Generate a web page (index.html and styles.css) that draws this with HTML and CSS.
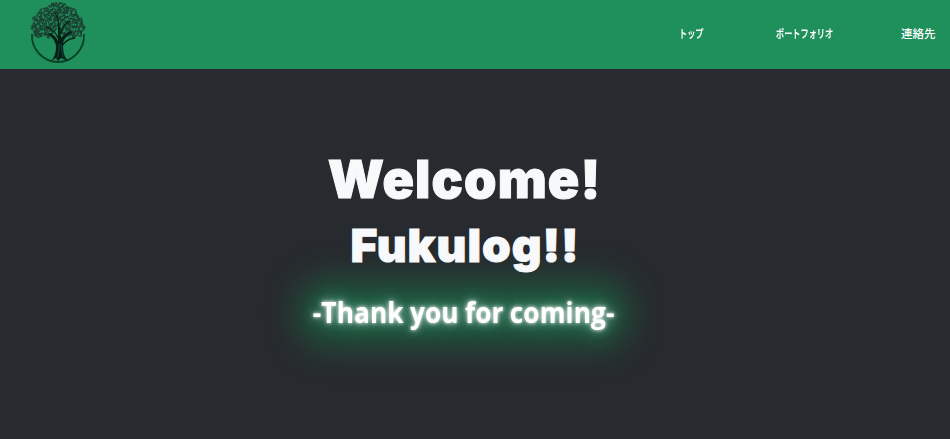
FILE: index.html
```html
<!DOCTYPE html>
<html lang="ja">
<head>
<meta charset="utf-8">
<title>Fukulog</title>
<link rel="stylesheet" href="styles.css">
</head>
<body>
<header class="header">
  <svg class="logo" viewBox="0 0 60 66" aria-hidden="true">
    <defs>
      <filter id="leaves" x="0" y="0" width="100%" height="100%">
        <feTurbulence type="fractalNoise" baseFrequency="0.42" numOctaves="2" seed="7" result="n"/>
        <feColorMatrix in="n" type="matrix" values="0 0 0 0 .01  0 0 0 0 .05  0 0 0 0 .03  4 0 0 0 -1.2" result="c"/>
        <feComposite in="c" in2="SourceGraphic" operator="in"/>
      </filter>
    </defs>
    <path class="ring" d="M4 34C3 50 16 62 30 62S57 50 56 34"/>
    <path filter="url(#leaves)" d="M19 7L23 3 30 2 37 3 42 7 48 9 50 15 55 19 55 24 58 28 54 32 54 37 49 36 45 39 39 36 33 34 29 29 24 35 21 39 16 36 10 38 6 36 5 31 2 28 5 23 4 18 9 14 12 9Z"/>
    <path class="trunk" d="M23 61Q28 56 28 47Q28 40 20 34L22 33Q28 36 30 41L30 27 32 27 33 38Q36 34 43 31L44 33Q34 38 35 46Q35 56 40 61L33 58 30 61 28 58Z"/>
    <path class="branch" d="M30 38Q27 30 18 27M33 34Q34 25 42 21M31 29Q31 19 27 13M34 46Q38 39 47 38"/>
    <path class="bark" d="M31 44Q32 53 29 58M33 44L35 57"/>
  </svg>
  <nav class="nav">
    <a class="item item-top"><span class="kana">トップ</span></a>
    <a class="item item-work"><span class="kana">ポートフォリオ</span></a>
    <a class="item item-contact">連絡先</a>
  </nav>
</header>
<main class="hero">
  <h1 class="title">Welcome!</h1>
  <h2 class="name">Fukulog!!</h2>
  <p class="thanks">-Thank you for coming-</p>
</main>
</body>
</html>
```
FILE: styles.css
```css
* { box-sizing: border-box; }
body { margin: 0; height: 439px; overflow: hidden; background: #272a2e; }
.header { height: 69px; display: flex; justify-content: space-between; background: #1f8f5b; }
.logo { width: 60px; height: 66px; margin-left: 28px; }
.ring { fill: none; stroke: #09412a; stroke-width: 1.8; }
.trunk { fill: #051f17; }
.branch { fill: none; stroke: #051f17; stroke-width: 1.3; }
.bark { fill: none; stroke: #176b47; stroke-width: .6; }
.nav { display: flex; padding: 25px 15px 0 0; color: #fff; font: 500 11.5px/17px "Noto Sans CJK JP", sans-serif; }
.item { white-space: nowrap; }
.item-top { width: 97px; }
.item-work { width: 125px; }
.item-contact { width: 34px; }
.kana { display: inline-block; transform: scaleX(.71); transform-origin: left; -webkit-text-stroke: .2px #fff; }
.hero { height: 370px; padding-right: 22px; background: #272a2e; display: flex; flex-direction: column; align-items: center; text-align: center; color: #f8f9fb; }
.title, .name { position: relative; z-index: 1; margin: 0; font-family: Inter, sans-serif; font-weight: 900; white-space: nowrap; }
.title { padding: 80px 0 0 1px; font-size: 52px; line-height: 62px; letter-spacing: 1.1px; -webkit-text-stroke: 1px #f8f9fb; }
.name { font-size: 46px; line-height: 68px; letter-spacing: 1px; padding-left: 2px; -webkit-text-stroke: 1px #f8f9fb; }
.thanks { position: relative; margin: 9px 0 0; color: #fff; font: 700 29px/48px "Open Sans", sans-serif; letter-spacing: .1px; word-spacing: -.7px; white-space: nowrap; transform: scaleX(.905); text-shadow: 0 0 4px #fff, 0 0 10px rgba(255,255,255,.65), 0 0 24px #30b080; }
.thanks::before { content: ""; position: absolute; z-index: -1; inset: -7px -18px -9px; border-radius: 32px; background: rgba(31,115,70,.62); filter: blur(18px); }
```
